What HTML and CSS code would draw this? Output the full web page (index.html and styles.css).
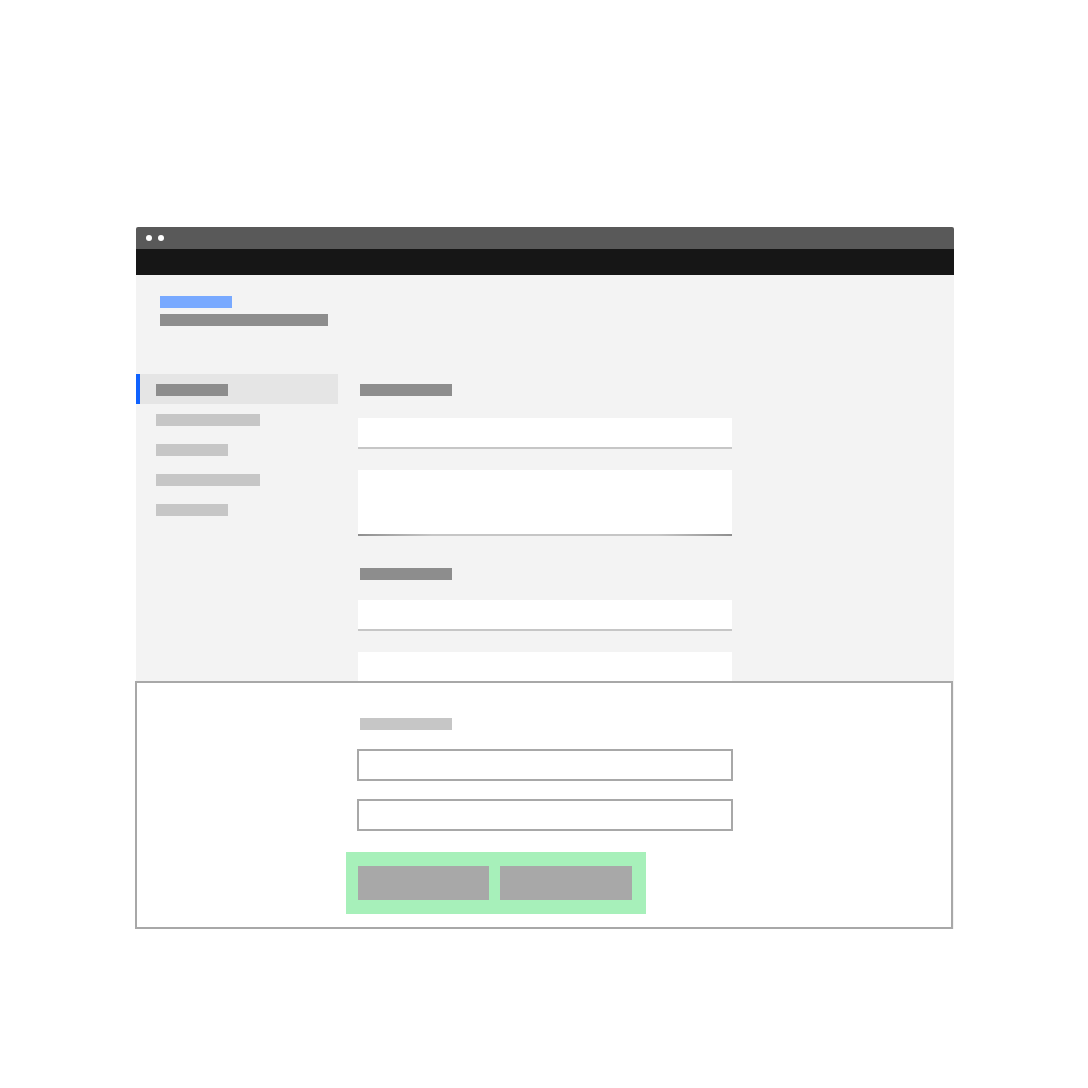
FILE: index.html
```html
<!DOCTYPE html>
<html>
<head>
<meta charset="utf-8">
<link rel="stylesheet" href="styles.css">
</head>
<body>
<div class="stage">
  <div class="window">
    <div class="titlebar"><span class="dot"></span><span class="dot"></span></div>
    <div class="menubar"></div>
    <div class="content">
      <div class="header">
        <div class="bar bar-blue"></div>
        <div class="bar bar-sub"></div>
      </div>
      <div class="body">
        <nav class="sidebar">
          <div class="nav-item active"><span class="bar nav-bar dark w72"></span></div>
          <div class="nav-item"><span class="bar nav-bar w104"></span></div>
          <div class="nav-item"><span class="bar nav-bar w72"></span></div>
          <div class="nav-item"><span class="bar nav-bar w104"></span></div>
          <div class="nav-item"><span class="bar nav-bar w72"></span></div>
        </nav>
        <main class="main">
          <div class="bar section-title first"></div>
          <div class="field f1"></div>
          <div class="field area"></div>
          <div class="bar section-title second"></div>
          <div class="field f3"></div>
          <div class="field f4"></div>
        </main>
      </div>
    </div>
    <div class="overlay">
      <div class="ov-col">
        <div class="bar ov-label"></div>
        <div class="ov-input first"></div>
        <div class="ov-input second"></div>
        <div class="actions">
          <div class="btn b1"></div>
          <div class="btn b2"></div>
        </div>
      </div>
    </div>
  </div>
</div>
</body>
</html>
```

FILE: styles.css
```css
html, body {
  margin: 0;
  padding: 0;
  background: #ffffff;
  font-family: "Liberation Sans", Arial, sans-serif;
}
.stage {
  padding-top: 227px;
  padding-left: 136px;
}
.window {
  position: relative;
  width: 818px;
}
.titlebar {
  height: 22px;
  background: #595959;
  border-radius: 2px 2px 0 0;
  display: flex;
  align-items: center;
  gap: 6px;
  padding-left: 10px;
}
.dot {
  width: 6px;
  height: 6px;
  border-radius: 50%;
  background: #ffffff;
}
.menubar {
  height: 26px;
  background: #161616;
}
.content {
  background: #f3f3f3;
  height: 654px;
  box-sizing: border-box;
  padding-top: 21px;
  overflow: hidden;
}
.bar {
  display: block;
  height: 12px;
}
.header {
  padding-left: 24px;
}
.bar-blue {
  width: 72px;
  background: #78a9ff;
  margin-bottom: 6px;
}
.bar-sub {
  width: 168px;
  background: #8d8d8d;
}
.body {
  display: flex;
  margin-top: 48px;
}
.sidebar {
  width: 202px;
  flex: none;
}
.nav-item {
  height: 30px;
  display: flex;
  align-items: flex-start;
  padding-top: 10px;
  padding-left: 20px;
  box-sizing: border-box;
}
.nav-item.active {
  background: #e5e5e5;
  border-left: 4px solid #0f62fe;
  padding-left: 16px;
}
.nav-bar {
  background: #c6c6c6;
}
.nav-bar.dark {
  background: #8d8d8d;
}
.w72 { width: 72px; }
.w104 { width: 104px; }
.main {
  margin-left: 20px;
  width: 374px;
}
.section-title {
  width: 92px;
  background: #8d8d8d;
  margin-left: 2px;
}
.section-title.first { margin-top: 10px; }
.section-title.second { margin-top: 32px; }
.field {
  background: #ffffff;
  box-sizing: border-box;
  height: 31px;
  border-bottom: 2px solid #c6c6c6;
}
.f1 { margin-top: 22px; }
.area {
  margin-top: 21px;
  height: 66px;
  border-bottom: 2px solid #a8a8a8;
  border-image: linear-gradient(to right, #8d8d8d, #c6c6c6 20%, #c6c6c6 80%, #8d8d8d) 1;
}
.f3 { margin-top: 20px; }
.f4 { margin-top: 21px; height: 60px; border-bottom: none; }
.overlay {
  position: absolute;
  left: -1px;
  top: 454px;
  width: 818px;
  height: 248px;
  box-sizing: border-box;
  border: 2px solid #a8a8a8;
  background: #ffffff;
  padding: 35px 0 0 220px;
}
.ov-col {
  width: 376px;
}
.ov-label {
  width: 92px;
  background: #c6c6c6;
  margin-left: 3px;
}
.ov-input {
  width: 376px;
  height: 32px;
  box-sizing: border-box;
  border: 2px solid #a8a8a8;
  background: #ffffff;
}
.ov-input.first { margin-top: 19px; }
.ov-input.second { margin-top: 18px; }
.actions {
  margin-top: 21px;
  margin-left: -11px;
  width: 300px;
  height: 62px;
  box-sizing: border-box;
  padding: 14px 14px 14px 12px;
  background: #a7f0ba;
  display: flex;
  gap: 11px;
}
.btn {
  height: 34px;
  background: #a8a8a8;
}
.b1 { width: 131px; }
.b2 { width: 132px; }
```
